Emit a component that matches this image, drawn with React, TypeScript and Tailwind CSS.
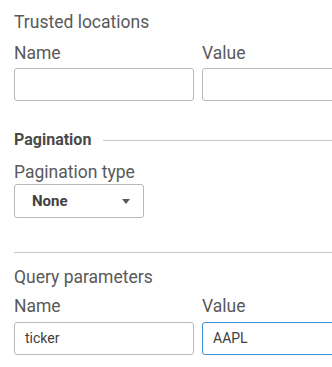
const font = { fontFamily: "Roboto, 'Liberation Sans', sans-serif" };

const Field = ({ value, focused }: { value?: string; focused?: boolean }) => (
  <div
    className={`h-[33px] rounded-[3px] border bg-white px-[10px] flex items-center text-[14px] text-[#404040] ${
      focused ? "border-[#3f8fd2]" : "border-[#b8b8b8]"
    }`}
  >
    {value}
  </div>
);

const KeyValue = ({ name, value, gap }: { name?: string; value?: string; gap: string }) => (
  <div className="grid grid-cols-[180px_180px] gap-x-2">
    <div className={`text-[17.5px] leading-5 ${gap}`}>Name</div>
    <div className={`text-[17.5px] leading-5 ${gap}`}>Value</div>
    <Field value={name} />
    <Field value={value} focused={!!value} />
  </div>
);

export default function App() {
  return (
    <div className="w-[332px] h-[367px] overflow-hidden bg-white text-[#595959] pl-[14px]" style={font}>
      <div className="pt-[12px] text-[17.5px] leading-5 pb-[11px]">Trusted locations</div>
      <KeyValue gap="pb-[5px]" />

      <div className="mt-[29px] flex items-center gap-[12px]">
        <span className="text-[16px] font-bold leading-5 text-[#4a4a4a]">Pagination</span>
        <div className="flex-1 h-px bg-[#c8c8c8]" />
      </div>
      <div className="mt-[12px] text-[17.5px] leading-5 pb-[2px]">Pagination type</div>
      <div className="w-[130px] h-[34px] rounded-[3px] border border-[#b8b8b8] flex items-center justify-between pl-[17px] pr-[13px]">
        <span className="text-[15px] font-bold text-[#404040]">None</span>
        <svg width="8" height="5" viewBox="0 0 8 5">
          <path d="M0 0h8L4 5z" fill="#595959" />
        </svg>
      </div>

      <div className="mt-[34px] h-px bg-[#c8c8c8]" />
      <div className="mt-[14px] text-[17.5px] leading-5 pb-[9px]">Query parameters</div>
      <KeyValue name="ticker" value="AAPL" gap="pb-[6px]" />
    </div>
  );
}
